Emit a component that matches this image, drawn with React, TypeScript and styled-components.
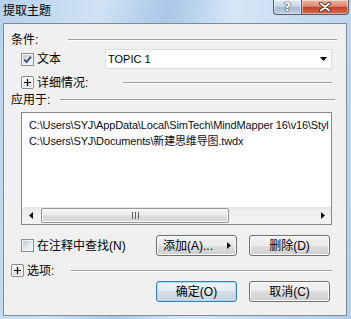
import React from "react";
import styled, { createGlobalStyle } from "styled-components";

const GlobalStyle = createGlobalStyle`
  html, body {
    margin: 0;
    padding: 0;
    background: #ffffff;
  }
  body {
    font-family: "Liberation Sans", "Noto Sans CJK SC", sans-serif;
    color: #000;
  }
`;

const DialogWindow = styled.div`
  width: 351px;
  height: 319px;
  display: flex;
  flex-direction: column;
  overflow: hidden;
  background: linear-gradient(
    100deg,
    #b8d2ec 0%,
    #cfe2f4 25%,
    #a9c7e7 42%,
    #d6e7f6 58%,
    #c2d9f0 80%,
    #b4cfeb 100%
  );
`;

const TitleBar = styled.div`
  height: 23px;
  flex: none;
  display: flex;
  justify-content: space-between;
  align-items: flex-start;
`;

const TitleText = styled.div`
  font-family: "Noto Sans CJK SC", sans-serif;
  font-size: 12px;
  line-height: 14px;
  padding: 3px 0 0 3px;
`;

const CaptionButtons = styled.div`
  display: flex;
  margin-right: 2px;
`;

const CaptionButton = styled.div<{ $kind: "help" | "close" }>`
  height: 15px;
  width: ${({ $kind }) => ($kind === "help" ? "29px" : "47px")};
  box-sizing: border-box;
  border: 1px solid #4c5d72;
  border-top: none;
  border-left: ${({ $kind }) => ($kind === "help" ? "1px solid #4c5d72" : "none")};
  border-radius: ${({ $kind }) => ($kind === "help" ? "0 0 0 4px" : "0 0 4px 0")};
  background: ${({ $kind }) =>
    $kind === "help"
      ? "linear-gradient(#e3ebf4, #c9d7e6 45%, #a9bdd2 52%, #b9cbdd)"
      : "linear-gradient(#eeb2a2, #dc8a75 45%, #c4432a 52%, #d4694c)"};
  box-shadow: inset 0 0 0 1px rgba(255, 255, 255, 0.45);
  display: flex;
  align-items: center;
  justify-content: center;
`;

const HelpGlyph = styled.span`
  font-family: "DejaVu Sans", sans-serif;
  font-weight: bold;
  font-size: 12px;
  line-height: 12px;
  color: #ffffff;
  text-shadow: 0 0 1px #2e3c4e, 0 0 1px #2e3c4e, 0 0 1px #2e3c4e;
`;

const ClientArea = styled.div`
  flex: 1;
  margin: 0 4px 3px 3px;
  border: 1px solid #7d8c9c;
  background: #f0f0f0;
  display: flex;
  flex-direction: column;
  padding-left: 7px;
`;

const Row = styled.div<{
  $top: number;
  $indent?: number;
  $width: number;
  $height: number;
  $end?: boolean;
}>`
  margin-top: ${({ $top }) => $top}px;
  margin-left: ${({ $indent }) => $indent ?? 0}px;
  width: ${({ $width }) => $width}px;
  height: ${({ $height }) => $height}px;
  display: flex;
  align-items: center;
  justify-content: ${({ $end }) => ($end ? "flex-end" : "flex-start")};
  flex: none;
`;

const Label = styled.span<{ $w?: number }>`
  font-size: 12px;
  line-height: 14px;
  white-space: nowrap;
  flex: none;
  width: ${({ $w }) => ($w ? `${$w}px` : "auto")};
`;

const EtchedLine = styled.div`
  flex: 1;
  height: 0;
  border-top: 1px solid #a0a0a0;
  border-bottom: 1px solid #ffffff;
`;

const CheckField = styled.label<{ $w?: number }>`
  display: flex;
  align-items: center;
  gap: 3px;
  flex: ${({ $w }) => ($w ? "none" : "1")};
  width: ${({ $w }) => ($w ? `${$w}px` : "auto")};
`;

const CheckBox = styled.span`
  width: 13px;
  height: 13px;
  box-sizing: border-box;
  border: 1px solid #8e8f8f;
  padding: 1px;
  background: #f4f4f4;
  flex: none;
  display: flex;
`;

const CheckInner = styled.span`
  flex: 1;
  background: linear-gradient(135deg, #c3c8cf, #e9ebee 60%, #f8f8f8);
  display: flex;
  align-items: center;
  justify-content: center;
`;

const ExpandButton = styled.span`
  width: 13px;
  height: 13px;
  box-sizing: border-box;
  border: 1px solid #8a8a8a;
  border-radius: 2px;
  background: linear-gradient(#ffffff, #ececec 50%, #d8d8d8);
  box-shadow: inset 0 0 0 1px #fbfbfb;
  margin-right: 3px;
  flex: none;
  display: flex;
  align-items: center;
  justify-content: center;
`;

const ComboBox = styled.div`
  width: 227px;
  height: 20px;
  box-sizing: border-box;
  border: 1px solid #d8dce3;
  background: #ffffff;
  padding: 0 4px 0 2px;
  display: flex;
  align-items: center;
  justify-content: space-between;
  font-size: 11px;
`;

const ListBox = styled.div`
  margin-top: 5px;
  margin-left: 10px;
  width: 311px;
  height: 113px;
  box-sizing: border-box;
  border: 1px solid #828790;
  background: #ffffff;
  display: flex;
  flex-direction: column;
  flex: none;
`;

const ListItems = styled.div`
  flex: 1;
  overflow: hidden;
  padding: 4px 0 0 7px;
`;

const ListItem = styled.div`
  font-size: 11px;
  line-height: 16px;
  letter-spacing: -0.15px;
  white-space: nowrap;
  color: #0d0d1a;
`;

const HScroll = styled.div`
  height: 17px;
  flex: none;
  display: flex;
  background: linear-gradient(#e4e4e4, #efefef 25%, #f2f2f2);
`;

const ScrollArrow = styled.div`
  width: 17px;
  flex: none;
  display: flex;
  align-items: center;
  justify-content: center;
`;

const ScrollTrack = styled.div`
  flex: 1;
  display: flex;
  padding: 1px 2px 1px 2px;
`;

const ScrollThumb = styled.div`
  width: 188px;
  box-sizing: border-box;
  border: 1px solid #979797;
  border-radius: 2px;
  background: linear-gradient(#f5f5f5, #ececec 45%, #dcdcdc 55%, #d4d4d4);
  box-shadow: inset 0 0 0 1px #f8f8f8;
  display: flex;
  align-items: center;
  justify-content: center;
`;

const ButtonGroup = styled.div`
  display: flex;
  gap: 12px;
  flex: none;
`;

const PushButton = styled.button<{ $default?: boolean; $menu?: boolean }>`
  width: 81px;
  height: 21px;
  box-sizing: border-box;
  margin: 0;
  border: 1px solid ${({ $default }) => ($default ? "#3c7fb1" : "#707070")};
  border-radius: 3px;
  background: ${({ $default }) =>
    $default
      ? "linear-gradient(#eef4f9, #e3ebf2 50%, #d3dde7 50%, #c8d4df)"
      : "linear-gradient(#f2f2f2, #ebebeb 50%, #dddddd 50%, #cfcfcf)"};
  box-shadow: ${({ $default }) =>
    $default ? "inset 0 0 0 1px #a9dcf6" : "inset 0 0 0 1px #fbfbfb"};
  font-family: "Liberation Sans", "Noto Sans CJK SC", sans-serif;
  font-size: 12px;
  line-height: 14px;
  color: #000;
  display: flex;
  align-items: center;
  justify-content: ${({ $menu }) => ($menu ? "space-between" : "center")};
  padding: ${({ $menu }) => ($menu ? "0 5px 0 6px" : "0")};
`;

const CheckMark = () => (
  <svg width="9" height="9" viewBox="0 0 9 9">
    <path d="M1.2 4.6 L3.6 7 L8 1.6" fill="none" stroke="#30498a" strokeWidth="1.8" />
  </svg>
);

const PlusGlyph = () => (
  <svg width="7" height="7" viewBox="0 0 7 7">
    <path d="M0 3.5 H7 M3.5 0 V7" stroke="#000" strokeWidth="1.2" />
  </svg>
);

const Triangle = ({ dir }: { dir: "down" | "left" | "right" }) => {
  if (dir === "down") {
    return (
      <svg width="7" height="4" viewBox="0 0 7 4">
        <polygon points="0,0 7,0 3.5,4" fill="#000" />
      </svg>
    );
  }
  return (
    <svg width="4" height="7" viewBox="0 0 4 7">
      <polygon points={dir === "left" ? "4,0 4,7 0,3.5" : "0,0 0,7 4,3.5"} fill="#111" />
    </svg>
  );
};

const CloseGlyph = () => (
  <svg width="12" height="10" viewBox="0 0 12 10">
    <path d="M2 1.5 L10 8.5 M10 1.5 L2 8.5" stroke="#3a1a14" strokeWidth="3.6" strokeLinecap="round" />
    <path d="M2 1.5 L10 8.5 M10 1.5 L2 8.5" stroke="#ffffff" strokeWidth="2" strokeLinecap="round" />
  </svg>
);

const GripGlyph = () => (
  <svg width="7" height="7" viewBox="0 0 7 7">
    <path d="M0.5 0 V7 M3.5 0 V7 M6.5 0 V7" stroke="#5d5d5d" strokeWidth="1" />
  </svg>
);

const App = () => {
  return (
    <>
      <GlobalStyle />
      <DialogWindow>
        <TitleBar>
          <TitleText>提取主题</TitleText>
          <CaptionButtons>
            <CaptionButton $kind="help">
              <HelpGlyph>?</HelpGlyph>
            </CaptionButton>
            <CaptionButton $kind="close">
              <CloseGlyph />
            </CaptionButton>
          </CaptionButtons>
        </TitleBar>

        <ClientArea>
          <Row $top={9} $width={326} $height={14}>
            <Label $w={57}>条件:</Label>
            <EtchedLine />
          </Row>

          <Row $top={2} $indent={10} $width={311} $height={20}>
            <CheckField $w={84}>
              <CheckBox>
                <CheckInner>
                  <CheckMark />
                </CheckInner>
              </CheckBox>
              <Label>文本</Label>
            </CheckField>
            <ComboBox>
              <span>TOPIC 1</span>
              <Triangle dir="down" />
            </ComboBox>
          </Row>

          <Row $top={7} $indent={10} $width={311} $height={13}>
            <ExpandButton>
              <PlusGlyph />
            </ExpandButton>
            <Label $w={86}>详细情况:</Label>
            <EtchedLine />
          </Row>

          <Row $top={4} $width={324} $height={14}>
            <Label $w={49}>应用于:</Label>
            <EtchedLine />
          </Row>

          <ListBox>
            <ListItems>
              <ListItem>C:\Users\SYJ\AppData\Local\SimTech\MindMapper 16\v16\Styl</ListItem>
              <ListItem>C:\Users\SYJ\Documents\新建思维导图.twdx</ListItem>
            </ListItems>
            <HScroll>
              <ScrollArrow>
                <Triangle dir="left" />
              </ScrollArrow>
              <ScrollTrack>
                <ScrollThumb>
                  <GripGlyph />
                </ScrollThumb>
              </ScrollTrack>
              <ScrollArrow>
                <Triangle dir="right" />
              </ScrollArrow>
            </HScroll>
          </ListBox>

          <Row $top={10} $indent={10} $width={309} $height={21}>
            <CheckField>
              <CheckBox>
                <CheckInner />
              </CheckBox>
              <Label>在注释中查找(N)</Label>
            </CheckField>
            <ButtonGroup>
              <PushButton $menu>
                <span>添加(A)...</span>
                <Triangle dir="right" />
              </PushButton>
              <PushButton>删除(D)</PushButton>
            </ButtonGroup>
          </Row>

          <Row $top={8} $width={321} $height={13}>
            <ExpandButton>
              <PlusGlyph />
            </ExpandButton>
            <Label $w={44}>选项:</Label>
            <EtchedLine />
          </Row>

          <Row $top={4} $width={319} $height={21} $end>
            <ButtonGroup>
              <PushButton $default>确定(O)</PushButton>
              <PushButton>取消(C)</PushButton>
            </ButtonGroup>
          </Row>
        </ClientArea>
      </DialogWindow>
    </>
  );
};

export default App;
